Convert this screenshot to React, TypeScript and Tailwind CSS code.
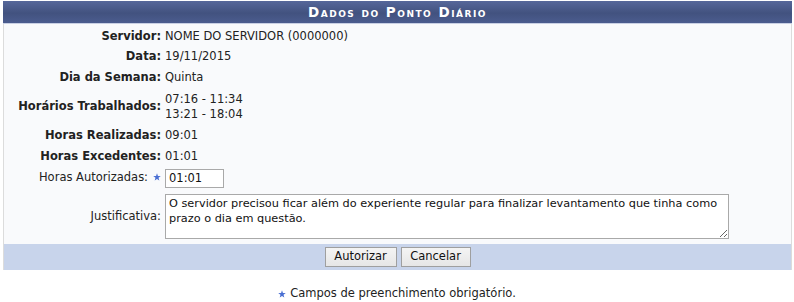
import React from 'react';

const Star: React.FC = () => (
    <svg width="8" height="8" viewBox="0 0 10 10" className="inline-block">
        <path d="M5 0.3 L6.2 3.6 L9.7 3.7 L6.9 5.9 L7.9 9.4 L5 7.4 L2.1 9.4 L3.1 5.9 L0.3 3.7 L3.8 3.6 Z" fill="#4a6fd3" />
    </svg>
);

type RowProps = {
    label: string;
    bold?: boolean;
    h: string;
    star?: boolean;
    children: React.ReactNode;
};

const Row: React.FC<RowProps> = ({ label, bold = true, h, star, children }) => (
    <div className={`flex items-center ${h}`}>
        <div className={`w-[160px] shrink-0 text-right pr-[3px] ${bold ? 'font-bold' : ''}`}>
            {label}
            {star && (
                <span className="ml-[5px] relative top-[-1px]">
                    <Star />
                </span>
            )}
        </div>
        <div className="pl-[1px] flex-1">{children}</div>
    </div>
);

const App: React.FC = () => {
    return (
        <div
            className="w-[794px] h-[302px] bg-white text-[11.5px] text-[#222] pt-[1px]"
            style={{ fontFamily: '"DejaVu Sans", Verdana, sans-serif' }}
        >
            <div className="ml-[3px] w-[789px]">
                {/* cabeçalho */}
                <div className="h-[22px] flex items-center justify-center bg-[linear-gradient(#56679a,#42527f_55%,#4b5c8e)] text-white font-bold tracking-[1.5px] [font-variant:small-caps] text-[13.5px]">
                    Dados do Ponto Diário
                </div>
                <div className="h-px bg-[#c9d0e4]" />

                <div className="bg-[#f9fafc] border-x border-[#dcdcdc] pt-[3px]">
                    <Row label="Servidor:" h="h-[20px]">NOME DO SERVIDOR (0000000)</Row>
                    <Row label="Data:" h="h-[20px]">19/11/2015</Row>
                    <Row label="Dia da Semana:" h="h-[22px]">Quinta</Row>
                    <Row label="Horários Trabalhados:" h="h-[35px]">
                        <div className="leading-[15px]">07:16 - 11:34</div>
                        <div className="leading-[15px]">13:21 - 18:04</div>
                    </Row>
                    <Row label="Horas Realizadas:" h="h-[23px]">09:01</Row>
                    <Row label="Horas Excedentes:" h="h-[20px]">01:01</Row>
                    <Row label="Horas Autorizadas:" bold={false} star h="h-[22px]">
                        <input
                            type="text"
                            defaultValue="01:01"
                            className="w-[59px] h-[19px] border border-[#a9a9a9] bg-white px-[3px] text-[11.5px] text-[#111] outline-none"
                            style={{ fontFamily: '"DejaVu Sans", Verdana, sans-serif' }}
                        />
                    </Row>
                    <Row label="Justificativa:" bold={false} h="h-[55px]">
                        <textarea
                            defaultValue="O servidor precisou ficar além do experiente regular para finalizar levantamento que tinha como prazo o dia em questão."
                            className="block w-[564px] h-[45px] border border-[#a9a9a9] bg-white px-[3px] py-[1px] text-[11.3px] leading-[15px] text-[#111] outline-none"
                            style={{ fontFamily: '"DejaVu Sans", Verdana, sans-serif' }}
                        />
                    </Row>
                </div>

                {/* rodapé */}
                <div className="h-[26px] bg-[#c8d4eb] border-x border-[#dcdcdc] flex items-center justify-center gap-[4px]">
                    <button className="w-[72px] h-[20px] border border-[#9f9f9f] bg-[linear-gradient(#f4f4f4,#e6e6e6)] text-[11.5px] text-[#111]">
                        Autorizar
                    </button>
                    <button className="w-[70px] h-[20px] border border-[#9f9f9f] bg-[linear-gradient(#f4f4f4,#e6e6e6)] text-[11.5px] text-[#111]">
                        Cancelar
                    </button>
                </div>
            </div>

            <div className="mt-[15px] flex items-center justify-center gap-[4px] text-[#222]">
                <Star />
                <span>Campos de preenchimento obrigatório.</span>
            </div>
        </div>
    );
};

export default App;
